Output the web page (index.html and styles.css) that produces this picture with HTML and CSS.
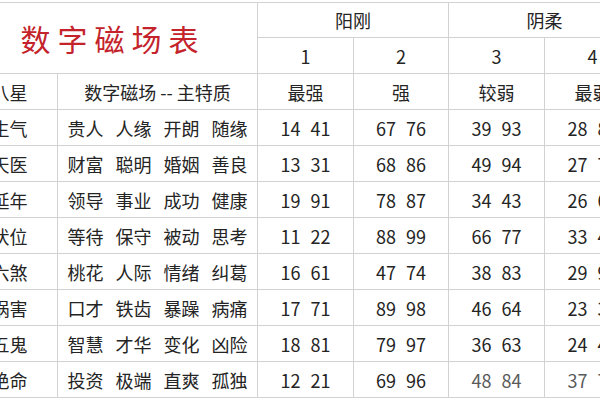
FILE: index.html
```html
<!DOCTYPE html>
<html lang="zh">
<head>
<meta charset="utf-8">
<link rel="stylesheet" href="styles.css">
</head>
<body>
<div class="sheet">
  <table class="grid">
    <colgroup>
      <col class="c-a"><col class="c-b"><col class="c-n"><col class="c-n2"><col class="c-n"><col class="c-n">
    </colgroup>
    <tr class="r1">
      <td class="title" colspan="2" rowspan="2">数字磁场表</td>
      <td colspan="2">阳刚</td>
      <td colspan="2">阴柔</td>
    </tr>
    <tr>
      <td>1</td><td>2</td><td>3</td><td>4</td>
    </tr>
    <tr>
      <td>八星</td><td>数字磁场 -- 主特质</td><td>最强</td><td>强</td><td>较弱</td><td>最弱</td>
    </tr>
    <tr>
      <td>生气</td><td class="tr">贵人 人缘 开朗 随缘</td><td class="num">14 41</td><td class="num">67 76</td><td class="num">39 93</td><td class="num">28 82</td>
    </tr>
    <tr>
      <td>天医</td><td class="tr">财富 聪明 婚姻 善良</td><td class="num">13 31</td><td class="num">68 86</td><td class="num">49 94</td><td class="num">27 72</td>
    </tr>
    <tr>
      <td>延年</td><td class="tr">领导 事业 成功 健康</td><td class="num">19 91</td><td class="num">78 87</td><td class="num">34 43</td><td class="num">26 62</td>
    </tr>
    <tr>
      <td>伏位</td><td class="tr">等待 保守 被动 思考</td><td class="num">11 22</td><td class="num">88 99</td><td class="num">66 77</td><td class="num">33 44</td>
    </tr>
    <tr>
      <td>六煞</td><td class="tr">桃花 人际 情绪 纠葛</td><td class="num">16 61</td><td class="num">47 74</td><td class="num">38 83</td><td class="num">29 92</td>
    </tr>
    <tr>
      <td>祸害</td><td class="tr">口才 铁齿 暴躁 病痛</td><td class="num">17 71</td><td class="num">89 98</td><td class="num">46 64</td><td class="num">23 32</td>
    </tr>
    <tr>
      <td>五鬼</td><td class="tr">智慧 才华 变化 凶险</td><td class="num">18 81</td><td class="num">79 97</td><td class="num">36 63</td><td class="num">24 42</td>
    </tr>
    <tr>
      <td>绝命</td><td class="tr">投资 极端 直爽 孤独</td><td class="num">12 21</td><td class="num">69 96</td><td class="num faded">48 84</td><td class="num faded">37 73</td>
    </tr>
  </table>
</div>
</body>
</html>
```

FILE: styles.css
```css
html, body {
  margin: 0;
  padding: 0;
  background: #ffffff;
}

.sheet {
  width: 600px;
  height: 400px;
  overflow: hidden;
  background: #ffffff;
}

.grid {
  border-collapse: collapse;
  table-layout: fixed;
  width: 679px;
  margin-left: -39px;
  margin-top: 2px;
  font-family: "Noto Sans CJK SC", "Noto Sans", sans-serif;
  font-size: 18px;
  color: #242424;
}

.c-a { width: 96px; }
.c-b { width: 200px; }
.c-n { width: 96px; }
.c-n2 { width: 95px; }

.grid td {
  border: 1px solid #d2d2d2;
  height: 35px;
  padding: 0;
  text-align: center;
  vertical-align: middle;
  white-space: pre;
  line-height: 20px;
}

.grid .r1 td {
  height: 34px;
}

.grid td.title {
  font-size: 30px;
  letter-spacing: 7px;
  text-indent: 7px;
  color: #c4232b;
}

.grid td.tr {
  word-spacing: 8px;
}

.grid td.num {
  word-spacing: 6px;
}

.grid td.faded {
  color: #5a5a5a;
}
```
